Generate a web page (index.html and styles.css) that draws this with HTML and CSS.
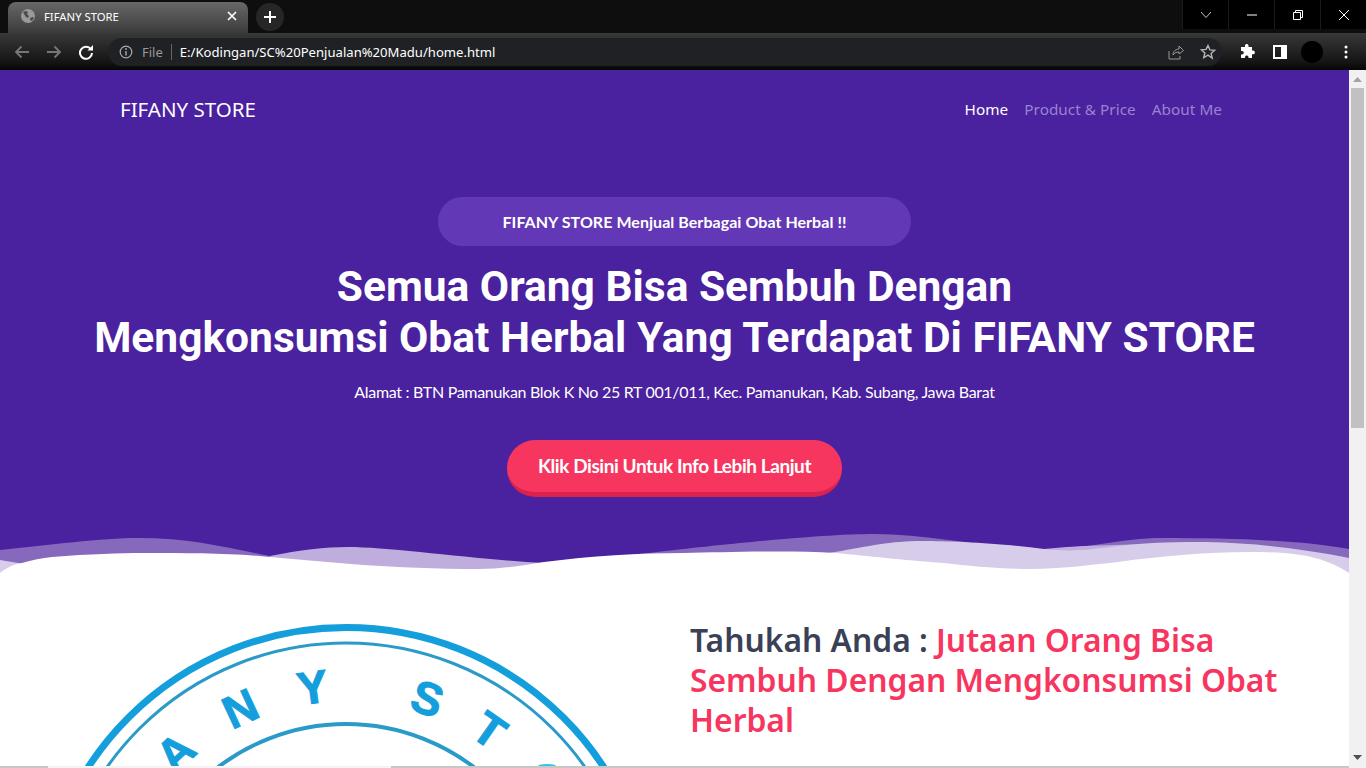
FILE: index.html
```html
<!DOCTYPE html>
<html lang="en">
<head>
    <meta charset="UTF-8">
    <meta name="viewport" content="width=device-width, initial-scale=1.0">
    <title>FIFANY STORE</title>
    <link rel="stylesheet" href="styles.css">
</head>
<body>

    <div class="tabstrip">
        <div class="tab">
            <svg class="tab-globe" width="16" height="16" viewBox="0 0 16 16">
                <circle cx="8" cy="8" r="7" fill="#9a9a9a"/>
                <path d="M3 4l3-1 2 1-1 2 2 2-1 2-2-1-2-3zM10 10l3-1 1 1-2 3-2-1z" fill="#4c4c4c"/>
            </svg>
            <span class="tab-title">FIFANY STORE</span>
            <svg class="tab-close" width="10" height="10" viewBox="0 0 10 10">
                <path d="M1 1l8 8M9 1l-8 8" stroke="#fff" stroke-width="1.7"/>
            </svg>
        </div>
        <div class="new-tab">
            <svg width="14" height="14" viewBox="0 0 14 14">
                <path d="M7 1v12M1 7h12" stroke="#fff" stroke-width="2"/>
            </svg>
        </div>
        <div class="window-btns">
            <div class="window-btn">
                <svg width="12" height="8" viewBox="0 0 12 8"><path d="M1 1l5 5.500 5-5.500" fill="none" stroke="#c8c8c8" stroke-width="1"/></svg>
            </div>
            <div class="window-btn">
                <svg width="12" height="2" viewBox="0 0 12 2"><path d="M1 1h10" stroke="#fff" stroke-width="1"/></svg>
            </div>
            <div class="window-btn">
                <svg width="12" height="12" viewBox="0 0 12 12"><path d="M1.500 3.500h7v7h-7zM3.500 3.500v-2h7v7h-2" fill="none" stroke="#fff" stroke-width="1"/></svg>
            </div>
            <div class="window-btn">
                <svg width="12" height="12" viewBox="0 0 12 12"><path d="M1 1l10 10M11 1l-10 10" stroke="#fff" stroke-width="1"/></svg>
            </div>
        </div>
    </div>

    <div class="toolbar">
        <svg class="nav-icon" width="16" height="14" viewBox="0 0 16 14"><path d="M15 7H2M7.500 1.500L2 7l5.500 5.500" fill="none" stroke="#777" stroke-width="1.800"/></svg>
        <svg class="nav-icon" width="16" height="14" viewBox="0 0 16 14"><path d="M1 7h13M8.500 1.500L14 7l-5.500 5.500" fill="none" stroke="#777" stroke-width="1.800"/></svg>
        <svg class="nav-icon" width="16" height="16" viewBox="0 0 16 16"><path d="M13 5.500A6 6 0 1 0 14 9" fill="none" stroke="#fff" stroke-width="2"/><path d="M9.500 6.500H15V1z" fill="#fff"/></svg>
        <div class="omnibox">
            <svg width="14" height="14" viewBox="0 0 14 14"><circle cx="7" cy="7" r="5.800" fill="none" stroke="#aaa" stroke-width="1.200"/><path d="M7 6v4.500" stroke="#aaa" stroke-width="1.400"/><circle cx="7" cy="4" r="0.900" fill="#aaa"/></svg>
            <span class="omni-file">File</span>
            <span class="omni-url">E:/Kodingan/SC%20Penjualan%20Madu/home.html</span>
            <svg class="omni-share" width="16" height="16" viewBox="0 0 16 16"><path d="M1 7v8h11v-3M5 11c0-4 3-6 6-6V2l4.500 4.500L11 10V8c-3 0-5 1-6 3z" fill="none" stroke="#999" stroke-width="1"/></svg>
            <svg width="16" height="16" viewBox="0 0 16 16"><path d="M8 1.500l1.900 4.400 4.800.4-3.600 3.100 1.100 4.700L8 11.100l-4.200 2.500 1.100-4.700-3.600-3.100 4.800-.4z" fill="none" stroke="#b5b5b5" stroke-width="1.400"/></svg>
        </div>
        <svg class="tool-icon" width="16" height="16" viewBox="0 0 16 16"><path d="M6 1.500a1.800 1.800 0 0 1 3.500 0V3h3.500v3.500h1a1.900 1.900 0 0 1 0 3.800h-1V14H9.500v-1a1.800 1.800 0 0 0-3.500 0v1H2v-3.500h1a1.800 1.800 0 0 0 0-3.600H2V3h4z" fill="#fff"/></svg>
        <svg class="tool-icon" width="14" height="14" viewBox="0 0 14 14"><path d="M0 0h14v14H0zM2 2v10h6V2z" fill="#fff" fill-rule="evenodd"/></svg>
        <div class="avatar"></div>
        <svg class="tool-icon kebab" width="4" height="14" viewBox="0 0 4 14"><circle cx="2" cy="2" r="1.500" fill="#fff"/><circle cx="2" cy="7" r="1.500" fill="#fff"/><circle cx="2" cy="12" r="1.500" fill="#fff"/></svg>
    </div>

    <div class="viewport">
        <div class="page">
            <header class="hero">
                <nav class="navbar">
                    <a class="brand">FIFANY STORE</a>
                    <div class="nav-links">
                        <a class="nav-link active">Home</a>
                        <a class="nav-link">Product &amp; Price</a>
                        <a class="nav-link">About Me</a>
                    </div>
                </nav>
                <div class="hero-text">
                    <div class="pill">FIFANY STORE Menjual Berbagai Obat Herbal !!</div>
                    <h1>Semua Orang Bisa Sembuh Dengan<br>Mengkonsumsi Obat Herbal Yang Terdapat Di FIFANY STORE</h1>
                    <p class="address">Alamat : BTN Pamanukan Blok K No 25 RT 001/011, Kec. Pamanukan, Kab. Subang, Jawa Barat</p>
                    <a class="btn-info">Klik Disini Untuk Info Lebih Lanjut</a>
                </div>
                <svg class="wave" width="1349" height="45" viewBox="0 530 1349 45" preserveAspectRatio="none">
                    <path fill="#8669bd" d="M0 550C50 545 100 538 139 538C190 538 230 548 270 556C340 570 480 575 544 566C600 558 640 554 683 549C720 545 820 534 875 534C930 534 990 549 1044 549C1090 549 1120 538 1162 538C1230 538 1300 540 1349 549V575H0Z"/>
                    <path fill="#bfaedd" d="M270 556C300 550 325 547 348 547C390 547 480 560 544 563C600 564 640 560 683 560L1044 549C1075 546 1100 545 1162 544V575H270Z"/>
                    <path fill="#d7cdea" d="M0 560L30 565L683 575L835 552C870 546 890 541 922 541C950 541 1000 543 1044 549C1070 552 1090 550 1118 546C1150 542 1180 542 1206 542C1260 543 1310 550 1349 558V575H0Z"/>
                    <path fill="#fff" d="M0 573C6 568 14 564 22 563C32 560 42 558 52 557C90 554 120 553 144 553C190 553 230 553 270 557C330 562 390 569 479 569C500 569 520 566 544 562C590 556 640 553 683 553C730 552 790 550 835 553C870 556 900 560 944 563C970 566 1000 569 1031 569C1060 569 1090 565 1118 562C1160 556 1210 552 1249 552C1280 552 1300 554 1315 558C1330 562 1340 567 1349 573V575H0Z"/>
                </svg>
            </header>

            <section class="about">
                <svg class="stamp" width="660" height="191" viewBox="0 575 660 191">
                    <g fill="none" stroke="#149fdc">
                        <circle cx="346" cy="935" r="307.500" stroke-width="7"/>
                        <circle class="ring-thin" cx="346" cy="935" r="292" stroke-width="3"/>
                        <circle class="ring-thin" cx="346" cy="935" r="211" stroke-width="4"/>
                    </g>
                    <g class="stamp-text">
                        <text x="346" y="701" transform="rotate(-43 346 935)">A</text>
                        <text x="346" y="701" transform="rotate(-25 346 935)">N</text>
                        <text x="346" y="701" transform="rotate(-7.700 346 935)">Y</text>
                        <text x="346" y="701" transform="rotate(19 346 935)">S</text>
                        <text x="346" y="701" transform="rotate(35 346 935)">T</text>
                    </g>
                    <ellipse cx="547" cy="766" rx="9" ry="2" fill="#33c3e8"/>
                </svg>
                <h2 class="about-title">Tahukah Anda : <span class="accent">Jutaan Orang Bisa Sembuh Dengan Mengkonsumsi Obat Herbal</span></h2>
            </section>

            <div class="hscroll"></div>
        </div>

        <div class="scrollbar">
            <svg width="9" height="5" viewBox="0 0 9 5"><path d="M4.500 0L9 5H0z" fill="#a3a3a3"/></svg>
            <div class="scroll-thumb"></div>
            <svg class="scroll-down" width="9" height="5" viewBox="0 0 9 5"><path d="M4.500 5L9 0H0z" fill="#505050"/></svg>
        </div>
    </div>

</body>
</html>
```

FILE: styles.css
```css
* {
    box-sizing: border-box;
}

html, body {
    margin: 0;
    height: 768px;
    overflow: hidden;
}

body {
    font-family: "Noto Sans", sans-serif;
    background-color: #fff;
    display: flex;
    flex-direction: column;
}

/* browser */
.tabstrip {
    height: 33px;
    background-color: #0e0e0e;
    display: flex;
    align-items: flex-end;
    padding-left: 8px;
}

.tab {
    width: 240px;
    height: 31px;
    border-radius: 8px 8px 0 0;
    background: linear-gradient(#686868, #3b3b3b);
    display: flex;
    align-items: center;
    padding: 0 11px 3px 12px;
    color: #fff;
    font-size: 11.3px;
}

.tab-title {
    margin-left: 8px;
    flex: 1;
}

.new-tab {
    width: 28px;
    height: 28px;
    margin: 0 0 2px 8px;
    border-radius: 50%;
    background-color: #262626;
    display: flex;
    align-items: center;
    justify-content: center;
}

.window-btns {
    margin-left: auto;
    align-self: flex-start;
    height: 29px;
    display: flex;
    background-color: #000;
}

.window-btn {
    width: 46px;
    display: flex;
    align-items: center;
    justify-content: center;
    border-left: 1px solid #1c1c1c;
}

.toolbar {
    height: 37px;
    background: linear-gradient(#383838, #141414 80%, #050505);
    display: flex;
    align-items: center;
    padding: 2px 17px 1px 14px;
}

.nav-icon {
    flex: none;
    margin-right: 16px;
}

.omnibox {
    flex: none;
    width: 1114px;
    margin-left: -2px;
    margin-right: -1px;
    height: 28px;
    background-color: #1f2125;
    border-radius: 14px;
    display: flex;
    align-items: center;
    padding: 0 6px 0 11px;
}

.omni-file {
    color: #999;
    font-size: 13px;
    margin-left: 9px;
    padding-right: 8px;
    border-right: 1px solid #666;
    line-height: 16px;
}

.omni-url {
    color: #fff;
    font-size: 13.1px;
    margin-left: 8px;
    flex: 1;
}

.omni-share {
    margin-right: 16px;
}

.tool-icon {
    flex: none;
    margin-left: 18px;
}

.kebab {
    margin-left: 21px;
}

.avatar {
    flex: none;
    width: 22px;
    height: 22px;
    border-radius: 50%;
    background-color: #000;
    margin: 0 0 0 14px;
}

/* page */
.viewport {
    height: 698px;
    display: flex;
}

.page {
    width: 1349px;
    overflow: hidden;
    position: relative;
}

.hero {
    height: 505px;
    background-color: #4a219e;
    position: relative;
    text-align: center;
}

.navbar {
    display: flex;
    justify-content: space-between;
    align-items: center;
    padding: 26px 127px 0 120px;
}

.brand {
    color: #fff;
    font-size: 20.5px;
    line-height: 27px;
}

.nav-links {
    display: flex;
    gap: 16px;
    margin-bottom: 2px;
}

.nav-link {
    color: #9a83cf;
    font-size: 15.3px;
    letter-spacing: 0.04px;
}

.nav-link.active {
    color: #fff;
}

.hero-text {
    padding-top: 74px;
}

.pill {
    width: 473px;
    height: 49px;
    margin: 0 auto;
    border-radius: 25px;
    background-color: #6238b6;
    color: #fff;
    font-family: Lato, sans-serif;
    font-weight: 700;
    font-size: 16px;
    letter-spacing: 0.05px;
    line-height: 49px;
}

h1 {
    margin: 15px 0 0;
    color: #fff;
    font-family: Roboto, sans-serif;
    font-weight: 700;
    font-size: 42.5px;
    line-height: 51px;
}

.address {
    margin: 18px 0 0;
    color: #fff;
    font-family: Lato, sans-serif;
    font-size: 16px;
    letter-spacing: -0.31px;
    line-height: 22px;
}

.btn-info {
    display: block;
    width: 335px;
    height: 57px;
    margin: 37px auto 0;
    border-radius: 28px;
    background-color: #f7365f;
    border-bottom: 5px solid #d9224c;
    color: #fff;
    font-family: Lato, sans-serif;
    font-weight: 700;
    font-size: 19px;
    letter-spacing: -0.43px;
    line-height: 52px;
}

.wave {
    position: absolute;
    left: 0;
    top: 460px;
    display: block;
}

.about {
    display: flex;
    align-items: flex-start;
    height: 191px;
}

.stamp {
    flex: none;
    display: block;
}

.ring-thin {
    stroke: #2a9bc8;
}

.stamp-text text {
    font-family: "Liberation Sans", sans-serif;
    font-weight: 700;
    font-size: 46px;
    fill: #149fdc;
    stroke: #149fdc;
    stroke-width: 1;
    text-anchor: middle;
}

.about-title {
    margin: 45px 60px 0 30px;
    color: #3a4055;
    font-weight: 600;
    font-size: 31.8px;
    line-height: 40px;
}

.accent {
    color: #f7365f;
}

.hscroll {
    height: 2px;
    background: linear-gradient(90deg, #c8c8c8 48px, #f4f4f4 48px, #f4f4f4 391px, #c8c8c8 391px);
}

.scrollbar {
    width: 17px;
    background-color: #f1f1f1;
    display: flex;
    flex-direction: column;
    align-items: center;
    padding: 7px 0 8px;
}

.scroll-thumb {
    width: 13px;
    height: 340px;
    margin-top: 6px;
    background-color: #c1c1c1;
}

.scroll-down {
    margin-top: auto;
}
```
